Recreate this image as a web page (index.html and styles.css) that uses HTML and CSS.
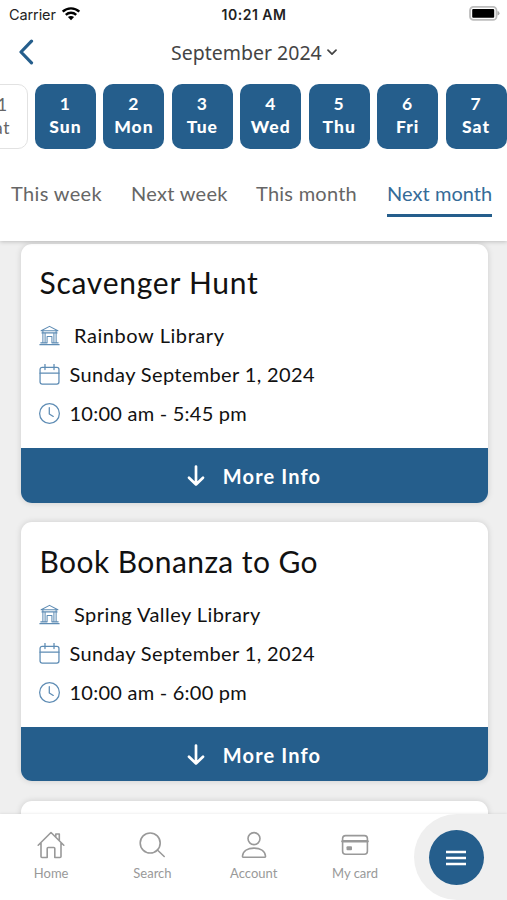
FILE: index.html
```
<!DOCTYPE html>
<html lang="en">
<head>
<meta charset="utf-8">
<title>Library events</title>
<link rel="stylesheet" href="styles.css">
</head>
<body>
<svg class="defs" width="0" height="0" aria-hidden="true">
  <symbol id="library" viewBox="0 0 20 20"><path d="M2 5.500 10 1.300l8 4.200zM3.700 5.500v11.500M5.800 7.500V17M14.200 7.500V17M16.300 5.500v11.500M1.700 17h5.800M12.500 17h5.800M.8 18.700h18.400M2.800 7.500h14.400M7.700 17v-6h4.600v6"/></symbol>
  <symbol id="calendar" viewBox="0 0 20 20"><rect x="1" y="3.200" width="18" height="16" rx="2"/><path d="M1 8.800h18M5.700.3v5M14.300.3v5"/></symbol>
  <symbol id="clock" viewBox="0 0 20 20"><circle cx="10" cy="10" r="9.400"/><path d="M9.800 4.500v6l3.800 2.300"/></symbol>
  <symbol id="down" viewBox="0 0 18 22"><path d="M9 1.500v18M2 12.800l7 6.700 7-6.700"/></symbol>
</svg>
<div class="screen">
  <header class="top">
    <div class="status">
      <span class="carrier">Carrier</span>
      <svg class="wifi" viewBox="0 0 20 15"><path d="M1.700 5.700c4.700-4.500 11.900-4.500 16.600 0M4.800 8.900c3-2.800 7.400-2.800 10.400 0"/><path class="solid" d="M6.900 11.100c1.800-1.500 4.400-1.500 6.200 0L10 14.300z"/></svg>
      <span class="time">10:21 AM</span>
      <svg class="battery" viewBox="0 0 31 15"><rect class="shell" x="1" y=".9" width="26.500" height="13" rx="3.500"/><rect x="3.200" y="3" width="22" height="8.800" rx="1"/><path class="tip" d="M28.500 5v4.600q2-.6 2-2.300T28.500 5z"/></svg>
    </div>
    <div class="month-bar">
      <svg class="back" viewBox="0 0 16 26"><path d="M13.500 2.200 3 13l10.500 10.800"/></svg>
      <span class="month">September 2024</span>
      <svg class="chevron" viewBox="0 0 10 7"><path d="m1 1.200 4 4 4-4"/></svg>
    </div>
    <div class="days">
      <div class="day off"><span>31</span><b>Sat</b></div>
      <div class="day"><span>1</span><b>Sun</b></div>
      <div class="day"><span>2</span><b>Mon</b></div>
      <div class="day"><span>3</span><b>Tue</b></div>
      <div class="day"><span>4</span><b>Wed</b></div>
      <div class="day"><span>5</span><b>Thu</b></div>
      <div class="day"><span>6</span><b>Fri</b></div>
      <div class="day"><span>7</span><b>Sat</b></div>
    </div>
    <nav class="tabs">
      <span class="tab tw">This week</span>
      <span class="tab nw">Next week</span>
      <span class="tab tm">This month</span>
      <span class="tab nm active">Next month</span>
    </nav>
  </header>
  <main class="list">
    <article class="card">
      <div class="body">
        <h2 class="t1">Scavenger Hunt</h2>
        <p class="place p1"><svg><use href="#library"/></svg><span>Rainbow Library</span></p>
        <p class="date"><svg><use href="#calendar"/></svg><span>Sunday September 1, 2024</span></p>
        <p class="hours"><svg><use href="#clock"/></svg><span>10:00 am - 5:45 pm</span></p>
      </div>
      <div class="more"><svg><use href="#down"/></svg><span>More Info</span></div>
    </article>
    <article class="card">
      <div class="body">
        <h2 class="t2">Book Bonanza to Go</h2>
        <p class="place p2"><svg><use href="#library"/></svg><span>Spring Valley Library</span></p>
        <p class="date"><svg><use href="#calendar"/></svg><span>Sunday September 1, 2024</span></p>
        <p class="hours"><svg><use href="#clock"/></svg><span>10:00 am - 6:00 pm</span></p>
      </div>
      <div class="more"><svg><use href="#down"/></svg><span>More Info</span></div>
    </article>
    <article class="card"></article>
  </main>
  <nav class="bottom">
    <div class="item"><svg viewBox="0 0 28 28"><path d="M1.200 14.200 14 1.500l12.800 12.700M4 12v13.500q0 1 1 1h5.200v-9q0-1 1-1h5.600q1 0 1 1v9H23q1 0 1-1V12M18.800 5.500V3h3.500v6.200"/></svg><span>Home</span></div>
    <div class="item"><svg viewBox="0 0 28 28"><circle cx="12.200" cy="12" r="10"/><path d="m19.400 19 6.800 6.500"/></svg><span>Search</span></div>
    <div class="item"><svg viewBox="0 0 28 28"><circle cx="14" cy="7.600" r="6"/><path d="M3.700 26.300q-1.300 0-1.200-1.300C3 20 7.800 17.100 14 17.100S25 20 25.500 25q.1 1.300-1.200 1.300z"/></svg><span>Account</span></div>
    <div class="item"><svg viewBox="0 0 28 28"><rect x="1.600" y="4.600" width="24.800" height="18.600" rx="3"/><path class="stripe" d="M1.600 10.200h24.800"/><rect class="chip" x="5.500" y="15.300" width="5.500" height="4" rx="1"/></svg><span>My card</span></div>
    <div class="menu"><div class="menu-button"><svg viewBox="0 0 20 16"><path d="M.5 2h19M.5 8h19M.5 14h19"/></svg></div></div>
  </nav>
</div>
</body>
</html>
```

FILE: styles.css
```
* { box-sizing: border-box; }
body { margin: 0; background: #efefef; font-family: Lato, "Liberation Sans", sans-serif; }
svg { fill: none; stroke: currentColor; stroke-linecap: round; stroke-linejoin: round; flex: none; }
.defs { position: absolute; }
.screen { width: 507px; height: 900px; overflow: hidden; display: flex; flex-direction: column; }
.top { position: relative; flex: none; height: 241px; background: #fff; box-shadow: 0 1px 4px rgba(0,0,0,.2); overflow: hidden; }
.status { height: 28px; display: grid; grid-template-columns: 52px 1fr auto 1fr 52px; align-items: center; font-family: Inter, sans-serif; color: #222; padding: 0 7px 0 9px; }
.carrier { font-size: 14.500px; letter-spacing: -.1px; white-space: nowrap; }
.wifi { width: 20px; height: 15px; stroke: #000; stroke-width: 2.400; stroke-linecap: butt; margin-top: -2px; }
.solid { fill: #000; stroke: none; }
.time { font-size: 14px; font-weight: 600; letter-spacing: .5px; margin-right: 1px; }
.battery { grid-column: 5; justify-self: end; width: 31px; height: 15px; fill: #000; stroke: none; margin-top: -2px; }
.battery .shell { fill: #fff; stroke: #bdbdbd; stroke-width: 1.800; }
.battery .tip { fill: #aaa; }
.month-bar { height: 49px; display: grid; grid-template-columns: 171px auto 1fr; align-items: center; color: #444; }
.back { width: 16px; height: 26px; margin: -2px 0 0 18px; stroke: #255e8c; stroke-width: 3.200; }
.month { font-family: "Noto Sans", sans-serif; font-size: 19.500px; white-space: nowrap; }
.chevron { width: 10px; height: 7px; margin-left: 5px; stroke-width: 1.700; }
.days { display: flex; gap: 7.450px; margin: 7px 0 0 -33.500px; }
.day { flex: none; width: 61px; height: 65px; border-radius: 10px; background: #255e8c; color: #fff; display: flex; flex-direction: column; align-items: center; padding-top: 7.500px; font-size: 17.500px; line-height: 23px; font-weight: 700; letter-spacing: 1px; }
.day.off { background: #fff; border: 1px solid #e2e2e2; color: #666; font-weight: 400; letter-spacing: .6px; }
.day.off b { font-weight: 400; }
.tabs { display: flex; margin-top: 26px; padding-left: 11px; font-size: 20px; color: #666; }
.tab { flex: none; height: 42px; line-height: 36px; white-space: nowrap; border-bottom: 3px solid transparent; }
.tw { width: 91px; margin-right: 29px; letter-spacing: .35px; }
.nw { width: 96px; margin-right: 29px; letter-spacing: .3px; }
.tm { width: 101px; margin-right: 30px; letter-spacing: .25px; }
.nm { width: 105px; letter-spacing: .05px; }
.tab.active { color: #356b98; border-color: #255e8c; }
.list { flex: 1; min-height: 0; overflow: hidden; padding: 2.500px 19.500px 0 20.500px; display: flex; flex-direction: column; gap: 19.500px; }
.card { flex: none; height: 259px; background: #fff; border-radius: 11px; box-shadow: 0 0 6px rgba(0,0,0,.14); overflow: hidden; display: flex; flex-direction: column; }
.body { height: 204.500px; padding: 18.500px 19px 0; color: #111; }
h2 { margin: 0 0 14px; font-size: 30px; font-weight: 400; line-height: 40px; white-space: nowrap; }
.t1 { letter-spacing: .75px; }
.t2 { letter-spacing: .42px; }
.body p { margin: 0; height: 39px; display: flex; align-items: center; gap: 9px; font-size: 20px; white-space: nowrap; }
.body p span { margin-top: -1px; }
.body p svg { width: 21px; height: 21px; margin-left: -.5px; margin-right: .5px; stroke: #5e8cb4; stroke-width: 1.200; }
.body .place { gap: 13.500px; }
.body .place svg { stroke-width: 1; }
.p1 { letter-spacing: .57px; }
.p2 { letter-spacing: .44px; }
.date { letter-spacing: .36px; }
.hours { letter-spacing: .24px; }
.more { flex: 1; background: #255e8c; color: #fff; display: flex; align-items: center; justify-content: center; gap: 18px; font-size: 20px; font-weight: 700; letter-spacing: 1.150px; padding-top: 2px; }
.more svg { width: 18px; height: 22px; stroke-width: 2.700; }
.bottom { position: relative; flex: none; height: 86px; background: #fff; display: flex; padding-left: .5px; box-shadow: 0 -1px 2px rgba(0,0,0,.06); }
.item { width: 101.300px; padding-top: 17px; display: flex; flex-direction: column; align-items: center; gap: 6px; color: #999; font-size: 13px; line-height: 17px; letter-spacing: 0; }
.item svg { width: 28px; height: 28px; stroke-width: 1.600; }
.item .stripe { stroke-width: 2.600; }
.item .chip { fill: #999; stroke: none; }
.menu { flex: 1; margin-left: 8px; background: #efefef; border-radius: 43px 0 0 43px; padding: 16px 0 0 15px; }
.menu-button { width: 55px; height: 55px; border-radius: 50%; background: #255e8c; color: #fff; display: flex; align-items: center; justify-content: center; }
.menu-button svg { width: 20px; height: 16px; stroke-width: 2.400; }
```
